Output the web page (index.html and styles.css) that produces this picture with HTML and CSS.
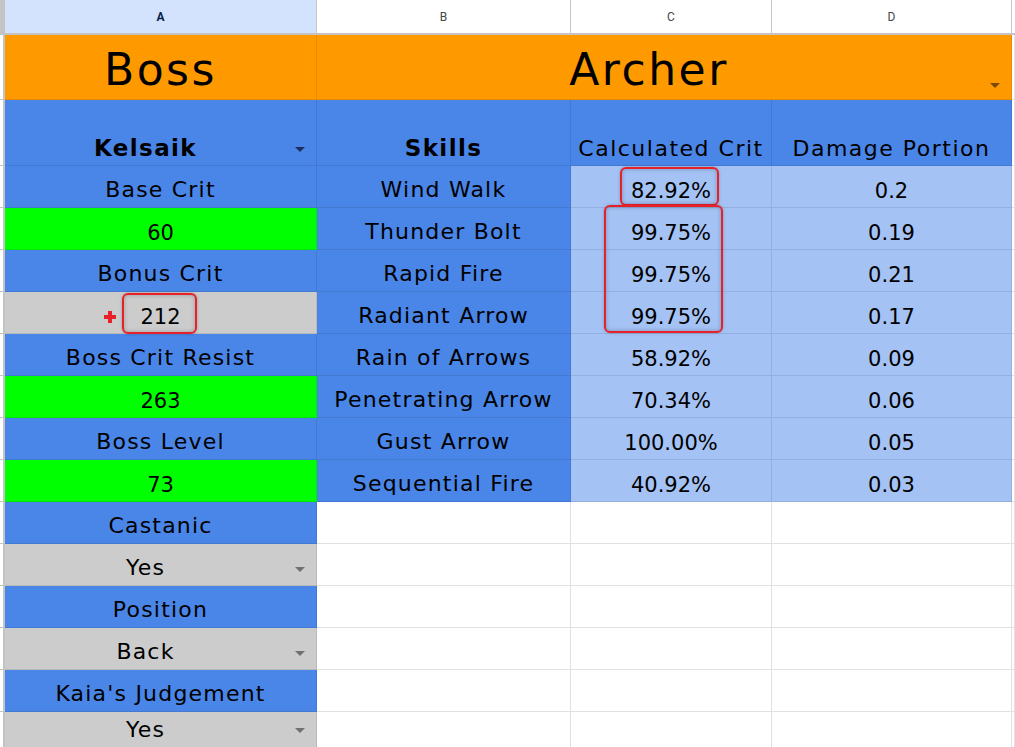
FILE: index.html
```html
<!DOCTYPE html>
<html>
<head>
<meta charset="utf-8">
<link rel="stylesheet" href="styles.css">
</head>
<body>
<div class="sheet">
  <div class="corner"></div>
  <div class="colhead sel">A</div>
  <div class="colhead">B</div>
  <div class="colhead">C</div>
  <div class="colhead">D</div>
  <div class="colhead last"></div>

  <div class="gut"></div>
  <div class="c orange title">Boss</div>
  <div class="c orange title merged dd">Archer<span class="arrow"></span></div>
  <div class="c white"></div>

  <div class="gut"></div>
  <div class="c blue hd dd">Kelsaik<span class="arrow"></span></div>
  <div class="c blue hd">Skills</div>
  <div class="c blue hd2">Calculated Crit</div>
  <div class="c blue hd2">Damage Portion</div>
  <div class="c white"></div>

  <div class="gut"></div>
  <div class="c blue">Base Crit</div>
  <div class="c blue">Wind Walk</div>
  <div class="c light num">82.92%</div>
  <div class="c light num">0.2</div>
  <div class="c white"></div>

  <div class="gut"></div>
  <div class="c green num">60</div>
  <div class="c blue">Thunder Bolt</div>
  <div class="c light num">99.75%</div>
  <div class="c light num">0.19</div>
  <div class="c white"></div>

  <div class="gut"></div>
  <div class="c blue">Bonus Crit</div>
  <div class="c blue">Rapid Fire</div>
  <div class="c light num">99.75%</div>
  <div class="c light num">0.21</div>
  <div class="c white"></div>

  <div class="gut"></div>
  <div class="c gray num">212</div>
  <div class="c blue">Radiant Arrow</div>
  <div class="c light num">99.75%</div>
  <div class="c light num">0.17</div>
  <div class="c white"></div>

  <div class="gut"></div>
  <div class="c blue">Boss Crit Resist</div>
  <div class="c blue">Rain of Arrows</div>
  <div class="c light num">58.92%</div>
  <div class="c light num">0.09</div>
  <div class="c white"></div>

  <div class="gut"></div>
  <div class="c green num">263</div>
  <div class="c blue">Penetrating Arrow</div>
  <div class="c light num">70.34%</div>
  <div class="c light num">0.06</div>
  <div class="c white"></div>

  <div class="gut"></div>
  <div class="c blue">Boss Level</div>
  <div class="c blue">Gust Arrow</div>
  <div class="c light num">100.00%</div>
  <div class="c light num">0.05</div>
  <div class="c white"></div>

  <div class="gut"></div>
  <div class="c green num">73</div>
  <div class="c blue">Sequential Fire</div>
  <div class="c light num">40.92%</div>
  <div class="c light num">0.03</div>
  <div class="c white"></div>

  <div class="gut"></div>
  <div class="c blue">Castanic</div>
  <div class="c white"></div><div class="c white"></div><div class="c white"></div><div class="c white"></div>

  <div class="gut"></div>
  <div class="c gray dd">Yes<span class="arrow"></span></div>
  <div class="c white"></div><div class="c white"></div><div class="c white"></div><div class="c white"></div>

  <div class="gut"></div>
  <div class="c blue">Position</div>
  <div class="c white"></div><div class="c white"></div><div class="c white"></div><div class="c white"></div>

  <div class="gut"></div>
  <div class="c gray dd">Back<span class="arrow"></span></div>
  <div class="c white"></div><div class="c white"></div><div class="c white"></div><div class="c white"></div>

  <div class="gut"></div>
  <div class="c blue">Kaia's Judgement</div>
  <div class="c white"></div><div class="c white"></div><div class="c white"></div><div class="c white"></div>

  <div class="gut"></div>
  <div class="c gray dd lastrow">Yes<span class="arrow"></span></div>
  <div class="c white"></div><div class="c white"></div><div class="c white"></div><div class="c white"></div>

  <div class="mark mark-212"></div>
  <div class="mark mark-wind"></div>
  <div class="mark mark-three"></div>
  <div class="plus"></div>
</div>
</body>
</html>
```

FILE: styles.css
```css
html, body {
  margin: 0;
  padding: 0;
  background: #ffffff;
  overflow: hidden;
}

.sheet {
  position: relative;
  display: grid;
  grid-template-columns: 5px 312px 254px 201px 240px 1fr;
  grid-template-rows: 35px 65px 66px repeat(14, 42px);
  width: 1015px;
  font-family: "DejaVu Sans", "Open Sans", sans-serif;
  color: #000;
}

.corner {
  background: #c4c4c4;
  border-bottom: 2px solid #c4c4c4;
}

.colhead {
  box-sizing: border-box;
  background: #ffffff;
  border-right: 1px solid #c7c7c7;
  border-bottom: 2px solid #c4c4c4;
  display: flex;
  align-items: center;
  justify-content: center;
  font-family: Roboto, "Liberation Sans", sans-serif;
  font-size: 12px;
  color: #444746;
  padding-top: 1px;
}

.colhead.sel {
  background: #d3e3fd;
  color: #0b1f4a;
  font-weight: 700;
}

.colhead.last {
  border-right: none;
}

.gut {
  box-sizing: border-box;
  background: #ffffff;
  border-right: 2px solid #c4c4c4;
  border-bottom: 1px solid #c4c4c4;
}

.c {
  position: relative;
  box-sizing: border-box;
  border-right: 1px solid rgba(0, 0, 0, 0.09);
  border-bottom: 1px solid rgba(0, 0, 0, 0.09);
  display: flex;
  align-items: flex-end;
  justify-content: center;
  font-size: 22px;
  line-height: 1;
  letter-spacing: 1.2px;
  padding-bottom: 6px;
  white-space: nowrap;
}

.c.num {
  font-size: 21px;
  letter-spacing: 0;
  padding-bottom: 5px;
}

.c.lastrow {
  padding-bottom: 12px;
}

.c.lastrow .arrow {
  bottom: 20px;
}

.white { background: #ffffff; border-color: #e1e1e1; }
.orange { background: #ff9900; }
.blue { background: #4a86e8; }
.light { background: #a4c2f4; }
.green { background: #00ff00; }
.gray { background: #cccccc; }

.title {
  font-size: 44px;
  letter-spacing: 2.5px;
  padding-bottom: 7px;
}

.merged {
  grid-column: span 3;
}

.hd {
  font-size: 23px;
  font-weight: 700;
  letter-spacing: 1.4px;
  padding-bottom: 5px;
}

.hd2 {
  font-size: 22px;
  letter-spacing: 1.5px;
  padding-bottom: 5px;
}

.dd {
  padding-right: 30px;
}

.arrow {
  position: absolute;
  right: 11px;
  bottom: 13px;
  width: 0;
  height: 0;
  border-left: 5px solid transparent;
  border-right: 5px solid transparent;
  border-top: 5px solid rgba(0, 0, 0, 0.45);
}

.blue .arrow {
  border-top-color: #1c2f5c;
}

.orange .arrow {
  right: 11px;
  bottom: 11px;
  border-top-color: #7a4900;
}

.mark {
  position: absolute;
  box-sizing: border-box;
  border: 2px solid #e8202a;
  border-radius: 6px;
  box-shadow: inset 0 0 4px rgba(0, 0, 0, 0.25), 0 0 3px rgba(0, 0, 0, 0.25);
}

.mark-212 { left: 122px; top: 293px; width: 75px; height: 41px; }
.mark-wind { left: 620px; top: 167px; width: 99px; height: 39px; }
.mark-three { left: 604px; top: 205px; width: 119px; height: 128px; }

.plus {
  position: absolute;
  left: 104px;
  top: 311px;
  width: 12px;
  height: 12px;
  background:
    linear-gradient(#e8202a, #e8202a) center / 12px 4px no-repeat,
    linear-gradient(#e8202a, #e8202a) center / 4px 12px no-repeat;
}
```
